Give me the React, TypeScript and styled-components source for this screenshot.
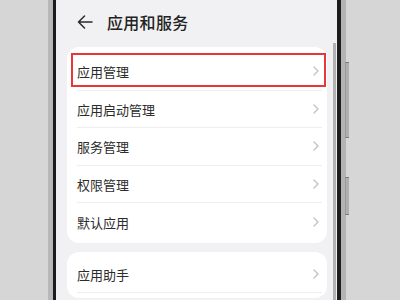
import React from "react";
import styled, { createGlobalStyle } from "styled-components";

const Global = createGlobalStyle`
  html, body { margin: 0; padding: 0; }
  body {
    background: #d6d6d6;
    width: 400px;
    height: 300px;
    overflow: hidden;
    font-family: "Noto Sans CJK SC", "Noto Sans", sans-serif;
  }
`;

const Stage = styled.div`
  display: flex;
  padding-left: 48px;
  height: 300px;
  overflow: hidden;
`;

const PhoneOuter = styled.div`
  position: relative;
  display: flex;
  height: 320px;
  border-left: 5px solid #b8b8b8;
  border-right: 5px solid #b4b4b4;
  background: #b8b8b8;
`;

const PhoneInner = styled.div`
  display: flex;
  border-left: 3px solid #1b1b1b;
  border-right: 4px solid #1e1e1e;
`;

const SideButton = styled.div<{ $top: number; $h: number }>`
  position: absolute;
  right: -8px;
  top: ${(p) => p.$top}px;
  width: 3px;
  height: ${(p) => p.$h}px;
  background: #b0b0b0;
  border-top: 1px solid #7a7a7a;
  border-bottom: 1px solid #7a7a7a;
  border-left: 1px solid #9a9a9a;
`;

const Screen = styled.div`
  position: relative;
  width: 281px;
  background: #f1f1f3;
  display: flex;
  flex-direction: column;
  padding: 0 10px 0 11px;
  box-sizing: border-box;
  overflow: hidden;
`;

const Header = styled.div`
  flex-shrink: 0;
  height: 47px;
  display: flex;
  align-items: center;
  gap: 14px;
  padding-left: 10px;
  padding-bottom: 4px;
  box-sizing: border-box;
`;

const Title = styled.div`
  font-size: 16px;
  font-weight: 500;
  color: #222;
  letter-spacing: 0.3px;
`;

const Card = styled.div<{ $pt: number; $pb: number }>`
  flex-shrink: 0;
  background: #ffffff;
  border-radius: 12px;
  padding: ${(p) => p.$pt}px 0 ${(p) => p.$pb}px;
  margin-bottom: 9px;
`;

const Row = styled.div`
  position: relative;
  height: 37.5px;
  padding: 0 5px 0 10px;
`;

const RowInner = styled.div<{ $divider: boolean }>`
  height: 100%;
  display: flex;
  align-items: center;
  justify-content: space-between;
  padding-right: 3px;
  box-sizing: border-box;
  border-bottom: ${(p) => (p.$divider ? "1px solid #eeeeee" : "none")};
`;

const Label = styled.span`
  font-size: 13px;
  color: #2c2c2c;
  padding-top: 1px;
`;

const Highlight = styled.div`
  position: absolute;
  left: 4px;
  right: 1px;
  top: 0;
  height: 34px;
  border: 2px solid #e8373a;
  box-sizing: border-box;
  pointer-events: none;
`;

const ScrollBar = styled.div`
  position: absolute;
  right: 1px;
  top: 43px;
  width: 3px;
  height: 280px;
  background: #b2b2b2;
`;

const Chevron = () => (
  <svg width="6" height="10" viewBox="0 0 6 10">
    <path d="M1 1 L5 5 L1 9" fill="none" stroke="#c2c2c2" strokeWidth="1.3" strokeLinecap="round" strokeLinejoin="round" />
  </svg>
);

const BackArrow = () => (
  <svg width="16" height="14" viewBox="0 0 16 14">
    <path d="M15 7 H1.5 M7.5 1 L1.5 7 L7.5 13" fill="none" stroke="#2a2a2a" strokeWidth="1.5" strokeLinecap="round" strokeLinejoin="round" />
  </svg>
);

const first = ["应用管理", "应用启动管理", "服务管理", "权限管理", "默认应用"];
const second = ["应用助手"];

export default function App() {
  return (
    <>
      <Global />
      <Stage>
        <PhoneOuter>
          <PhoneInner>
            <Screen>
              <Header>
                <BackArrow />
                <Title>应用和服务</Title>
              </Header>
              <Card $pt={6} $pb={2}>
                {first.map((t, i) => (
                  <Row key={t}>
                    <RowInner $divider={i < first.length - 1}>
                      <Label>{t}</Label>
                      <Chevron />
                    </RowInner>
                    {i === 0 && <Highlight />}
                  </Row>
                ))}
              </Card>
              <Card $pt={4} $pb={5}>
                {second.map((t) => (
                  <Row key={t}>
                    <RowInner $divider>
                      <Label>{t}</Label>
                      <Chevron />
                    </RowInner>
                  </Row>
                ))}
              </Card>
              <ScrollBar />
            </Screen>
          </PhoneInner>
          <SideButton $top={62} $h={74} />
          <SideButton $top={177} $h={36} />
        </PhoneOuter>
      </Stage>
    </>
  );
}
